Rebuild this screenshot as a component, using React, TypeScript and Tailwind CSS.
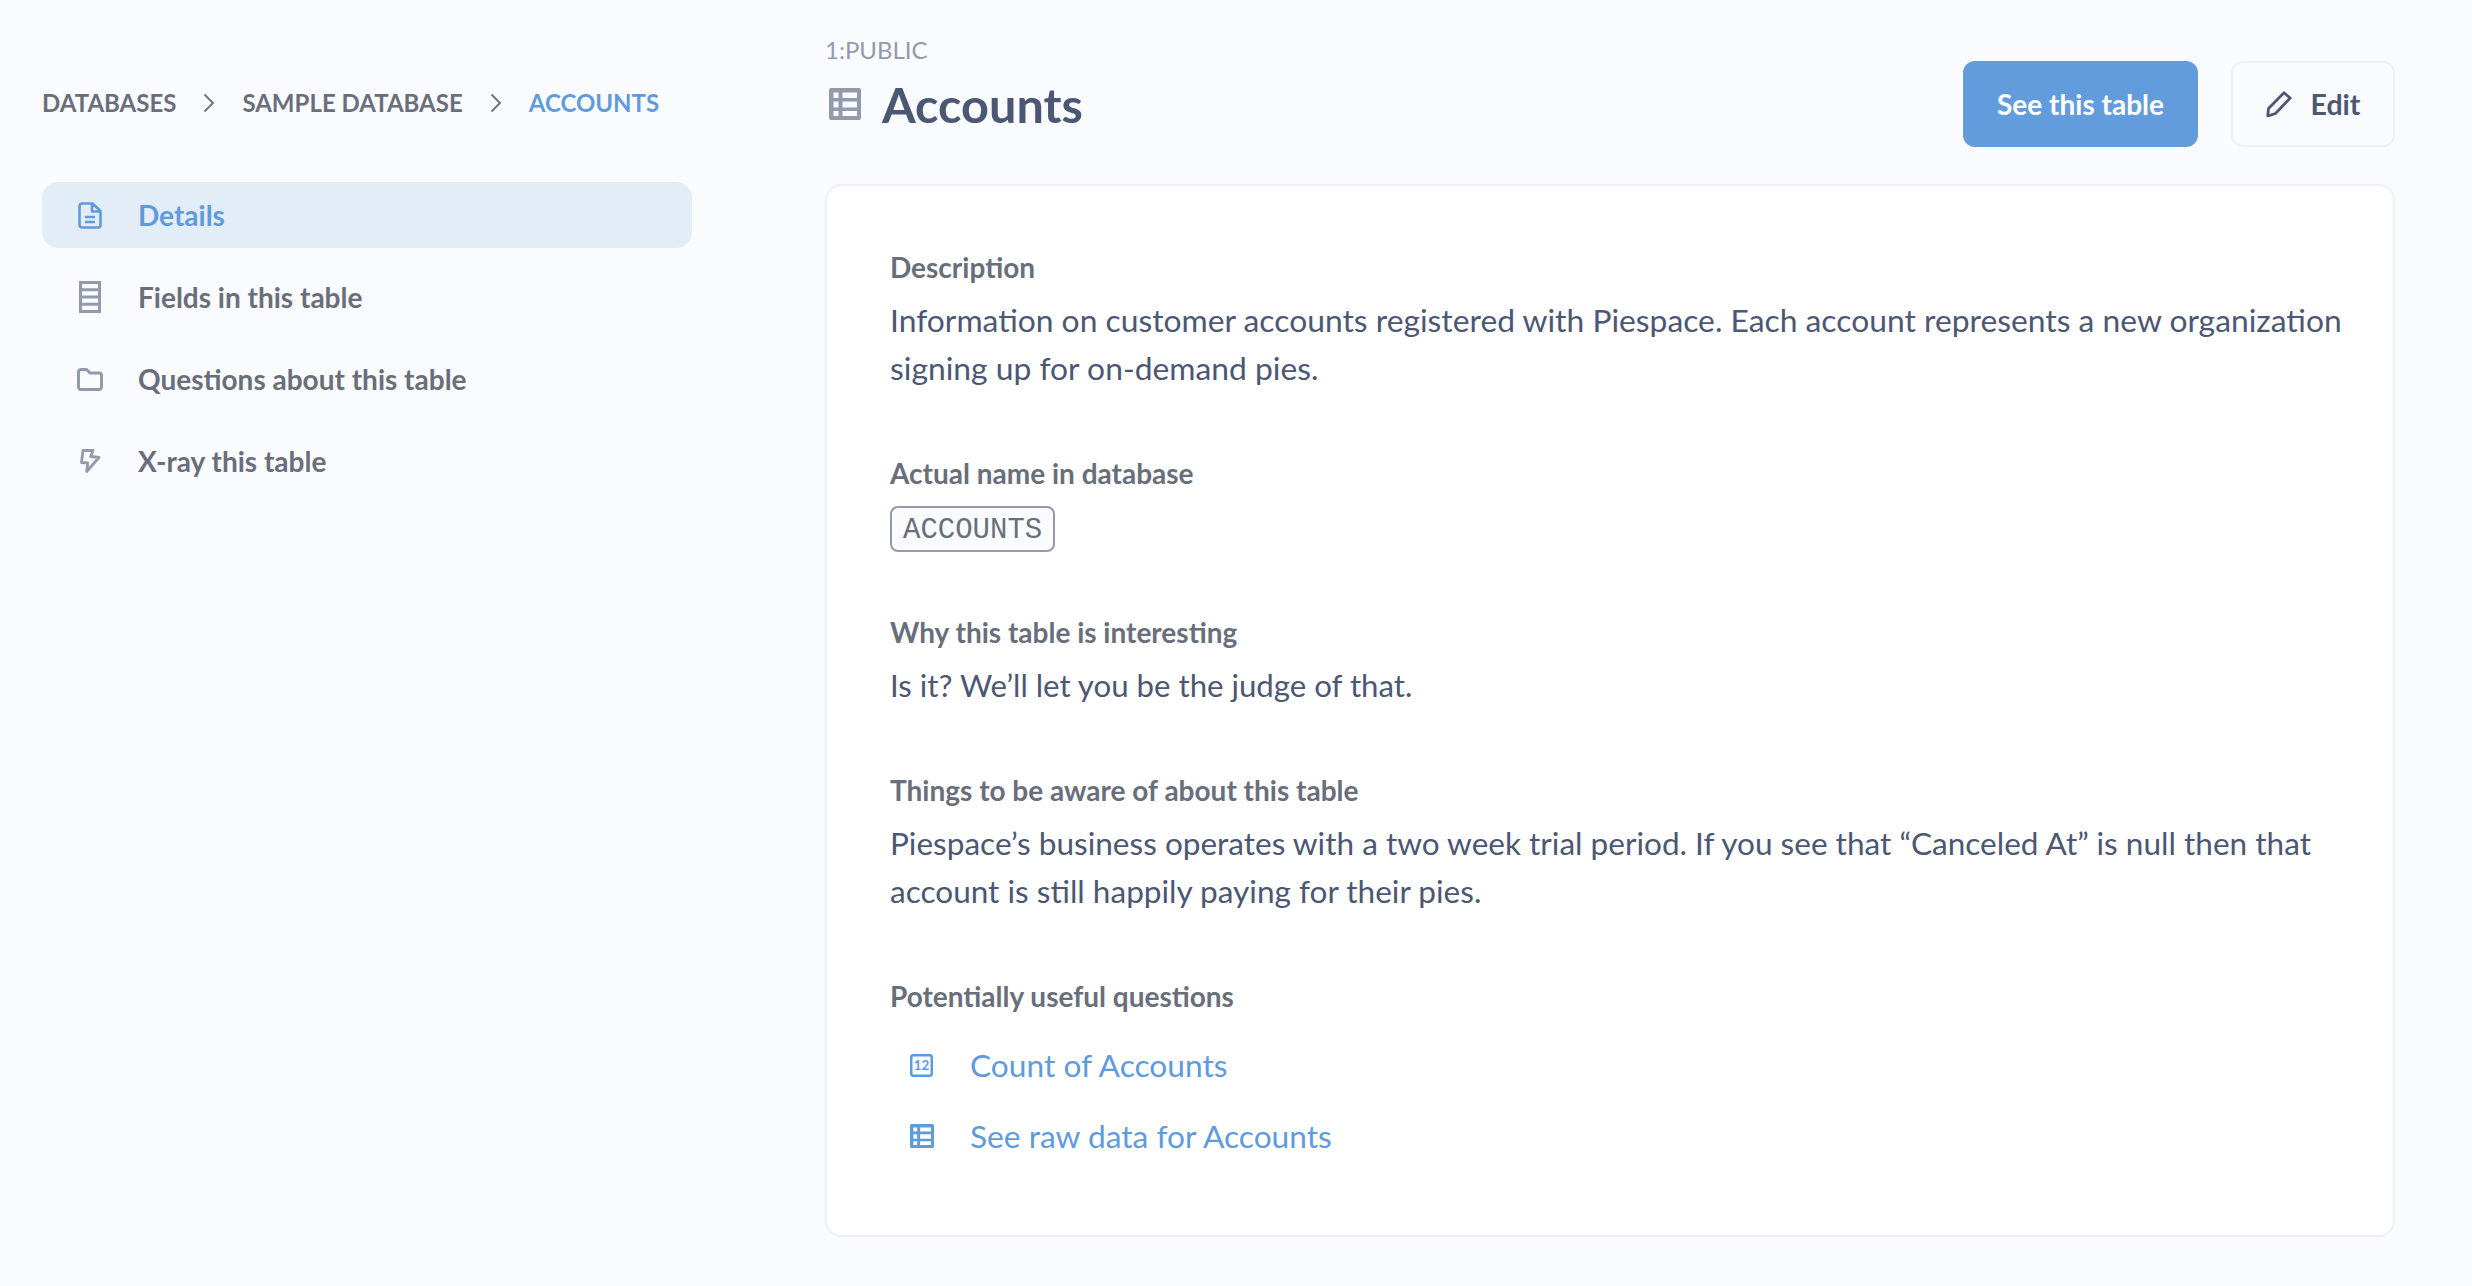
import React from "react";

const GridIcon = ({ className }: { className: string }) => (
  <svg viewBox="0 0 32 32" className={className} fill="currentColor">
    <path fillRule="evenodd" d="M2 0h28a2 2 0 0 1 2 2v28a2 2 0 0 1-2 2H2a2 2 0 0 1-2-2V2a2 2 0 0 1 2-2zm2.500 4.500v5.500h5V4.500h-5zm9 0v5.500H28V4.500H13.500zM4.500 13.500V19.500h5v-6h-5zm9 0v6H28v-6H13.500zM4.500 23V28h5v-5h-5zm9 0v5H28v-5H13.500z" />
  </svg>
);

const Chevron = () => (
  <svg viewBox="0 0 12 20" className="w-[12px] h-[20px] text-[#74767f]" fill="none" stroke="currentColor" strokeWidth="2">
    <path d="M1.500 1.500 10 10l-8.500 8.500" />
  </svg>
);

const DocIcon = () => (
  <svg viewBox="0 0 24 27" className="w-[24px] h-[27px]" fill="none" stroke="currentColor" strokeWidth="2.600" strokeLinejoin="round">
    <path d="M4 1.500h10.500L22.500 9v14a2.500 2.500 0 0 1-2.500 2.500H4A2.500 2.500 0 0 1 1.500 23V4A2.500 2.500 0 0 1 4 1.500zM14 2v7.500h8M7 15h10M7 20h10" />
  </svg>
);

const FieldsIcon = () => (
  <svg viewBox="0 0 22 32" className="w-[22px] h-[32px]" fill="none" stroke="currentColor" strokeWidth="3">
    <path d="M1.500 1.500h19v29h-19zM1 8.800h20M1 16h20M1 23.200h20" />
  </svg>
);

const FolderIcon = () => (
  <svg viewBox="0 0 26 23" className="w-[26px] h-[23px]" fill="none" stroke="currentColor" strokeWidth="3" strokeLinejoin="round">
    <path d="M1.500 4A2.500 2.500 0 0 1 4 1.500h5.500L13 5h9a2.500 2.500 0 0 1 2.500 2.500V19a2.500 2.500 0 0 1-2.500 2.500H4A2.500 2.500 0 0 1 1.500 19z" />
  </svg>
);

const BoltIcon = () => (
  <svg viewBox="0 0 21 25" className="w-[21px] h-[25px]" fill="none" stroke="currentColor" strokeWidth="2.800" strokeLinejoin="round">
    <path d="M3 1.500h10L10.700 7.500l8.300 1L6.700 22.500l1-8.500-6.200-.5z" />
  </svg>
);

const PencilIcon = () => (
  <svg viewBox="0 0 26 26" className="w-[26px] h-[26px]" fill="none" stroke="currentColor" strokeWidth="2.800" strokeLinejoin="round">
    <path d="M18 1.800 24.200 7 9.500 22.500 1.800 25l.7-7.500z" />
  </svg>
);

const NumberIcon = () => (
  <svg viewBox="0 0 24 24" className="w-[23px] h-[23px]" fill="none">
    <rect x="1.300" y="1.300" width="21.400" height="21.400" rx="2" stroke="currentColor" strokeWidth="2.600" />
    <text x="12" y="17" textAnchor="middle" fontSize="14" fontWeight="700" fill="currentColor" fontFamily="Lato, sans-serif">12</text>
  </svg>
);

const nav = [
  { label: "Fields in this table", icon: <FieldsIcon /> },
  { label: "Questions about this table", icon: <FolderIcon /> },
  { label: "X-ray this table", icon: <BoltIcon /> },
];

const Label = ({ children }: { children: React.ReactNode }) => (
  <h3 className="text-[28px] leading-[34px] font-bold text-[#696e7b]">{children}</h3>
);

export default function App() {
  return (
    <div className="flex min-h-[1286px] bg-[#f9fbfe] font-['Lato','Open_Sans',sans-serif]">
      <aside className="w-[692px] pl-[42px] shrink-0 pt-[85px]">
        <nav className="flex items-center text-[24px] leading-[36px] font-bold text-[#696e7b]">
          <span>DATABASES</span>
          <span className="mx-[27px] flex"><Chevron /></span>
          <span>SAMPLE DATABASE</span>
          <span className="mx-[27px] flex"><Chevron /></span>
          <span className="text-[#5f9bdc]">ACCOUNTS</span>
        </nav>
        <ul className="mt-[61px] flex flex-col gap-[16px] text-[28px] font-bold">
          <li className="h-[66px] flex items-center rounded-[16px] bg-[#e3edf8] text-[#5f9bdc]">
            <span className="w-[96px] flex"><span className="w-[48px] ml-[24px] flex justify-center"><DocIcon /></span></span>
            <span>Details</span>
          </li>
          {nav.map((n) => (
            <li key={n.label} className="h-[66px] flex items-center text-[#696e7b]">
              <span className="w-[96px] flex"><span className="w-[48px] ml-[24px] flex justify-center text-[#949aab]">{n.icon}</span></span>
              <span>{n.label}</span>
            </li>
          ))}
        </ul>
      </aside>

      <main className="ml-[133px] w-[1570px] shrink-0">
        <header className="flex items-end justify-between h-[147px] pt-[35px]">
          <div className="mb-[3px]">
            <div className="text-[24px] leading-[30px] text-[#949aab]">1:PUBLIC</div>
            <div className="-mt-[1px] flex items-center">
              <span className="ml-[4px] text-[#949aab] flex"><GridIcon className="w-[32px] h-[32px]" /></span>
              <h1 className="ml-[21px] text-[48.600px] leading-[80px] font-bold text-[#4c5773]">Accounts</h1>
            </div>
          </div>
          <div className="flex gap-[33px]">
            <button className="w-[235px] h-[86px] rounded-[12px] bg-[#639cdc] text-white text-[28px] font-bold">See this table</button>
            <button className="w-[164px] h-[86px] rounded-[12px] border-2 border-[#eef0f3] text-[#4c5773] text-[28.500px] font-bold flex items-center justify-center gap-[19px]">
              <PencilIcon />
              Edit
            </button>
          </div>
        </header>

        <section className="mt-[37px] h-[1053px] rounded-[16px] border-2 border-[#eef0f3] bg-white pl-[63px] pr-[40px] pt-[64px]">
          <Label>Description</Label>
          <p className="text-[31.800px] leading-[48px] text-[#4c5773] mt-[12px]">Information on customer accounts registered with Piespace. Each account represents a new organization signing up for on-demand pies.</p>

          <div className="mt-[64px]"><Label>Actual name in database</Label></div>
          <div className="mt-[16px] inline-flex h-[46px] items-center rounded-[8px] border-2 border-[#949aab] bg-[#f9fbfe] px-[11px] pt-[3px] font-['Liberation_Mono',monospace] text-[29px] text-[#696e7b]">ACCOUNTS</div>

          <div className="mt-[63px]"><Label>Why this table is interesting</Label></div>
          <p className="text-[31.200px] leading-[48px] text-[#4c5773] mt-[12px]">Is it? We’ll let you be the judge of that.</p>

          <div className="mt-[64px]"><Label>Things to be aware of about this table</Label></div>
          <p className="text-[31.550px] leading-[48px] text-[#4c5773] mt-[12px]">Piespace’s business operates with a two week trial period. If you see that “Canceled At” is null then that account is still happily paying for their pies.</p>

          <div className="mt-[64px]"><Label>Potentially useful questions</Label></div>
          <div className="mt-[28px] flex flex-col gap-[23px] text-[#5f9bdc] text-[31.700px] leading-[48px]">
            <a className="flex items-center">
              <span className="ml-[20px] w-[60px] flex"><NumberIcon /></span>
              Count of Accounts
            </a>
            <a className="flex items-center">
              <span className="ml-[20px] w-[60px] flex"><GridIcon className="w-[24px] h-[24px]" /></span>
              See raw data for Accounts
            </a>
          </div>
        </section>
      </main>
    </div>
  );
}
